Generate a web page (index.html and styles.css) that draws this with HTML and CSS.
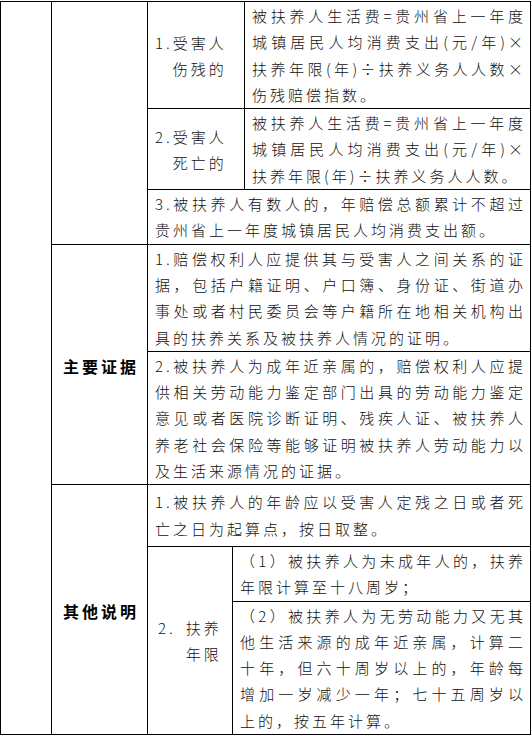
FILE: index.html
```html
<!DOCTYPE html>
<html lang="zh-CN">
<head>
<meta charset="utf-8">
<title>被扶养人生活费</title>
<link rel="stylesheet" href="styles.css">
</head>
<body>
<table class="grid">
  <colgroup>
    <col class="c1"><col class="c2"><col class="c3"><col class="c3b"><col class="c4">
  </colgroup>
  <tr>
    <td rowspan="8" class="blank"></td>
    <td rowspan="3" class="blank"></td>
    <td colspan="2" class="item"><span class="num">1.</span><span class="words">受害人<br>伤残的</span></td>
    <td class="txt">
      <span class="ln">被扶养人生活费=贵州省上一年度</span>
      <span class="ln">城镇居民人均消费支出(元/年)×</span>
      <span class="ln">扶养年限(年)÷扶养义务人人数×</span>
      <span class="ln">伤残赔偿指数。</span>
    </td>
  </tr>
  <tr>
    <td colspan="2" class="item"><span class="num">2.</span><span class="words">受害人<br>死亡的</span></td>
    <td class="txt">
      <span class="ln">被扶养人生活费=贵州省上一年度</span>
      <span class="ln">城镇居民人均消费支出(元/年)×</span>
      <span class="ln">扶养年限(年)÷扶养义务人人数。</span>
    </td>
  </tr>
  <tr>
    <td colspan="3" class="txt">
      <span class="ln">3.被扶养人有数人的，年赔偿总额累计不超过</span>
      <span class="ln">贵州省上一年度城镇居民人均消费支出额。</span>
    </td>
  </tr>
  <tr>
    <td rowspan="2" class="label">主要证据</td>
    <td colspan="3" class="txt">
      <span class="ln">1.赔偿权利人应提供其与受害人之间关系的证</span>
      <span class="ln">据，包括户籍证明、户口簿、身份证、街道办</span>
      <span class="ln">事处或者村民委员会等户籍所在地相关机构出</span>
      <span class="ln">具的扶养关系及被扶养人情况的证明。</span>
    </td>
  </tr>
  <tr>
    <td colspan="3" class="txt">
      <span class="ln">2.被扶养人为成年近亲属的，赔偿权利人应提</span>
      <span class="ln">供相关劳动能力鉴定部门出具的劳动能力鉴定</span>
      <span class="ln">意见或者医院诊断证明、残疾人证、被扶养人</span>
      <span class="ln">养老社会保险等能够证明被扶养人劳动能力以</span>
      <span class="ln">及生活来源情况的证据。</span>
    </td>
  </tr>
  <tr>
    <td rowspan="3" class="label">其他说明</td>
    <td colspan="3" class="txt roomy">
      <span class="ln">1.被扶养人的年龄应以受害人定残之日或者死</span>
      <span class="ln">亡之日为起算点，按日取整。</span>
    </td>
  </tr>
  <tr>
    <td rowspan="2" class="item spaced"><span class="num">2.</span><span class="words">扶养<br>年限</span></td>
    <td colspan="2" class="txt">
      <span class="ln">（1）被扶养人为未成年人的，扶养</span>
      <span class="ln">年限计算至十八周岁；</span>
    </td>
  </tr>
  <tr>
    <td colspan="2" class="txt">
      <span class="ln">（2）被扶养人为无劳动能力又无其</span>
      <span class="ln">他生活来源的成年近亲属，计算二</span>
      <span class="ln">十年，但六十周岁以上的，年龄每</span>
      <span class="ln">增加一岁减少一年；七十五周岁以</span>
      <span class="ln">上的，按五年计算。</span>
    </td>
  </tr>
</table>
</body>
</html>
```

FILE: styles.css
```css
html, body {
  margin: 0;
  padding: 0;
  background: #ffffff;
}

body {
  padding-top: 1px;
  font-family: "Noto Sans CJK SC", "Liberation Serif", sans-serif;
  font-weight: 300;
  color: #111;
}

.grid {
  border-collapse: collapse;
  table-layout: fixed;
  width: 531px;
}

.c1 { width: 51px; }
.c2 { width: 96px; }
.c3 { width: 85px; }
.c3b { width: 12px; }
.c4 { width: 286px; }

.grid td {
  border: 1px solid #000;
  padding: 0;
  vertical-align: middle;
}

.grid .txt {
  font-size: 15px;
  line-height: 26.3px;
  letter-spacing: 3px;
  padding: 1px 4px 0 7px;
}

.grid .txt.roomy {
  padding-top: 4px;
  padding-bottom: 4px;
}

.ln {
  display: block;
  white-space: nowrap;
  text-align: justify;
  text-align-last: justify;
}

.ln:last-child {
  text-align-last: left;
}

.grid .item {
  font-size: 15px;
  line-height: 26px;
  letter-spacing: 3px;
  padding: 2px 0 0 7px;
}

.item .num,
.item .words {
  display: inline-block;
  vertical-align: top;
}

.grid .item.spaced {
  padding-left: 10px;
}

.item.spaced .num {
  margin-right: 10px;
}

.grid .label {
  text-align: center;
  font-size: 16px;
  font-weight: 700;
  letter-spacing: 3px;
  padding: 2px 0 0 3px;
  color: #000;
}
```
